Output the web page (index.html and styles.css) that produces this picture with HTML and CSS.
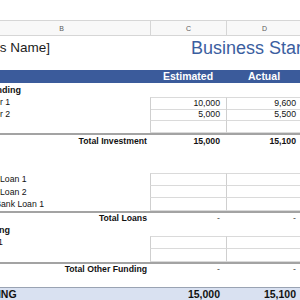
FILE: index.html
```html
<!DOCTYPE html>
<html lang="en">
<head>
<meta charset="utf-8">
<title>Business Startup Costs</title>
<link rel="stylesheet" href="styles.css">
</head>
<body>
<div class="sheet">
  <div class="row spacer"></div>

  <div class="row colhead">
    <div class="cell"></div>
    <div class="cell hdr">B</div>
    <div class="cell hdr">C</div>
    <div class="cell hdr">D</div>
    <div class="cell hdr"></div>
  </div>

  <div class="row title">
    <div class="cell name">[Business Name]</div>
    <div class="cell heading">Business Startup Costs</div>
  </div>

  <div class="row band">
    <div class="cell"></div>
    <div class="cell"></div>
    <div class="cell">Estimated</div>
    <div class="cell">Actual</div>
    <div class="cell"></div>
  </div>

  <div class="row section s-first">
    <div class="cell label">Investor Funding</div>
  </div>
  <div class="row item first">
    <div class="cell"></div>
    <div class="cell text">Investor 1</div>
    <div class="cell num">10,000</div>
    <div class="cell num">9,600</div>
  </div>
  <div class="row item">
    <div class="cell"></div>
    <div class="cell text">Investor 2</div>
    <div class="cell num">5,000</div>
    <div class="cell num">5,500</div>
  </div>
  <div class="row item">
    <div class="cell"></div>
    <div class="cell text"></div>
    <div class="cell num"></div>
    <div class="cell num"></div>
  </div>
  <div class="row total t-invest">
    <div class="cell"></div>
    <div class="cell tlabel">Total Investment</div>
    <div class="cell num">15,000</div>
    <div class="cell num">15,100</div>
  </div>

  <div class="row blank"></div>

  <div class="row section s-loans">
    <div class="cell label">Loans</div>
  </div>
  <div class="row item first loan">
    <div class="cell"></div>
    <div class="cell text">Owner Loan 1</div>
    <div class="cell num"></div>
    <div class="cell num"></div>
  </div>
  <div class="row item loan">
    <div class="cell"></div>
    <div class="cell text">Owner Loan 2</div>
    <div class="cell num"></div>
    <div class="cell num"></div>
  </div>
  <div class="row item loan">
    <div class="cell"></div>
    <div class="cell text">Local Bank Loan 1</div>
    <div class="cell num"></div>
    <div class="cell num"></div>
  </div>
  <div class="row total t-loans">
    <div class="cell"></div>
    <div class="cell tlabel">Total Loans</div>
    <div class="cell num dash">-</div>
    <div class="cell num dash">-</div>
  </div>

  <div class="row section s-other">
    <div class="cell label">Other Funding</div>
  </div>
  <div class="row item first other">
    <div class="cell"></div>
    <div class="cell text">Donor 1</div>
    <div class="cell num"></div>
    <div class="cell num"></div>
  </div>
  <div class="row item other">
    <div class="cell"></div>
    <div class="cell text"></div>
    <div class="cell num"></div>
    <div class="cell num"></div>
  </div>
  <div class="row total t-other">
    <div class="cell"></div>
    <div class="cell tlabel">Total Other Funding</div>
    <div class="cell num dash">-</div>
    <div class="cell num dash">-</div>
  </div>

  <div class="row blank b2"></div>

  <div class="row grand">
    <div class="cell glabel">TOTAL FUNDING</div>
    <div class="cell"></div>
    <div class="cell num">15,000</div>
    <div class="cell num">15,100</div>
    <div class="cell"></div>
  </div>
</div>
</body>
</html>
```

FILE: styles.css
```css
html, body {
  margin: 0;
  padding: 0;
  background: #ffffff;
}

body {
  width: 300px;
  height: 300px;
  overflow: hidden;
  font-family: "Liberation Sans", Arial, sans-serif;
  color: #111111;
}

/* Sheet is scrolled a little to the right: column A sits off the left edge */
.sheet {
  width: 380px;
  margin-left: -68px;
}

.row {
  display: grid;
  grid-template-columns: 40px 178px 76px 76px 1fr;
  box-sizing: border-box;
}

.cell {
  box-sizing: border-box;
  white-space: nowrap;
  min-width: 0;
}

.spacer { height: 20px; }

/* Column letters */
.colhead {
  height: 16px;
  border-top: 1px solid #d6d6d6;
  border-bottom: 1px solid #d6d6d6;
  background: #f8f8f8;
}
.colhead .hdr {
  border-left: 1px solid #d6d6d6;
  font-size: 7px;
  color: #5a5a5a;
  display: flex;
  align-items: center;
  justify-content: center;
}

/* Title row */
.title {
  height: 34px;
  align-items: end;
}
.title .name {
  grid-column: 1 / 3;
  padding-left: 16px;
  padding-bottom: 15px;
  font-size: 13.5px;
  line-height: 14px;
  color: #1c1c1c;
}
.title .heading {
  grid-column: 3 / 6;
  padding-left: 41px;
  padding-bottom: 13px;
  font-size: 18px;
  line-height: 18px;
  color: #3b5ea0;
}

/* Blue column band */
.band {
  height: 13px;
  background: #3b5b9b;
  color: #ffffff;
  font-weight: bold;
  font-size: 10.5px;
  line-height: 13px;
}
.band .cell { text-align: center; }

/* Section labels live in column A and run over into B */
.section {
  font-weight: bold;
  font-size: 9px;
}
.section .label {
  padding-left: 16px;
  overflow: visible;
}
.s-first { height: 14px; line-height: 14px; }
.s-loans { height: 13px; line-height: 13px; }
.s-other { height: 12px; line-height: 13px; }

/* Entry rows */
.item {
  height: 12px;
  font-size: 8.7px;
  line-height: 11px;
}
.item.loan { height: 12.5px; line-height: 12px; }
.item.other { height: 12.8px; line-height: 12px; }

.item .text {
  padding-left: 0;
  overflow: visible;
}
.item .num {
  border-left: 1px solid #cfcfcf;
  border-bottom: 1px solid #dadada;
}
.item.first .num { border-top: 1px solid #dadada; }

.num {
  text-align: right;
  padding-right: 6px;
}

/* Subtotal rows */
.total {
  border-top: 2px solid #a3a3a3;
  font-weight: bold;
  font-size: 8.7px;
}
.t-invest { height: 15px; line-height: 13px; }
.t-loans { height: 13.5px; line-height: 11.5px; }
.t-other { height: 13.5px; line-height: 11.5px; }

.tlabel {
  text-align: right;
  padding-right: 3px;
}
.dash {
  font-weight: normal;
  color: #444444;
}

.blank { height: 12px; }
.blank.b2 { height: 11.5px; }

/* Grand total */
.grand {
  height: 18px;
  border-top: 1px solid #9aa3b3;
  background: #d9e1f1;
  font-weight: bold;
  font-size: 10.5px;
  line-height: 13px;
}
.grand .glabel {
  padding-left: 0;
  overflow: visible;
}
```
